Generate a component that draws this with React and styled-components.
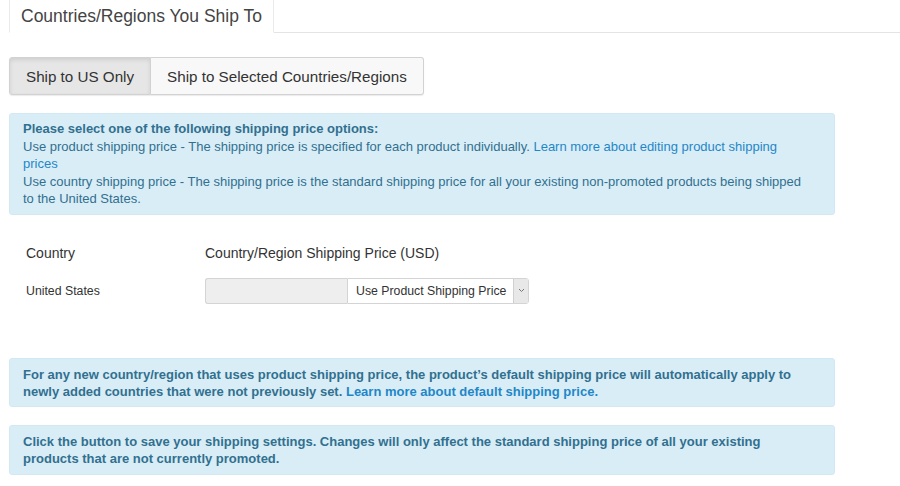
import React from "react";
import styled, { createGlobalStyle } from "styled-components";

const GlobalStyle = createGlobalStyle`
  body {
    margin: 0;
    background: #fff;
    font-family: "Liberation Sans", Arial, sans-serif;
    color: #333;
  }
`;

const Page = styled.div`
  padding: 0 65px 0 9px;
  width: 900px;
  box-sizing: border-box;
`;

const TabNav = styled.div`
  display: flex;
  border-bottom: 1px solid #e4e4e4;
  margin-right: -65px;
`;

const Tab = styled.div`
  padding: 7px 11px 6px 11px;
  margin-top: -1px;
  margin-bottom: -1px;
  font-size: 17.5px;
  line-height: 19px;
  color: #444;
  background: #fff;
  border: 1px solid #eaeaea;
  border-bottom-color: #fff;
`;

const ButtonGroup = styled.div`
  display: inline-flex;
  margin-top: 24px;
  border-radius: 3px;
  box-shadow: 0 1px 1px rgba(0, 0, 0, 0.08);
`;

const ToggleButton = styled.button`
  font-family: inherit;
  font-size: 15.2px;
  height: 38px;
  padding: 0 16px;
  color: #333;
  border: 1px solid #d2d2d2;
  background: ${(p) => (p.$active ? "#e6e6e6" : "#f8f8f8")};
  box-shadow: ${(p) => (p.$active ? "inset 0 2px 4px rgba(0,0,0,0.1)" : "none")};
  cursor: pointer;
  &:first-child {
    border-radius: 3px 0 0 3px;
  }
  &:last-child {
    border-left: none;
    border-radius: 0 3px 3px 0;
  }
`;

const Alert = styled.div`
  margin-top: 18px;
  padding: ${(p) => p.$pad || "6px 26px 6px 13px"};
  background: #d9edf7;
  border: 1px solid #d2e9f4;
  border-radius: 3px;
  color: #31708f;
  font-size: 13px;
  line-height: ${(p) => p.$lh || "17.5px"};
  font-weight: ${(p) => (p.$bold ? "bold" : "normal")};
`;

const Link = styled.a`
  color: #1f87c7;
  text-decoration: none;
`;

const Table = styled.div`
  margin-top: 28px;
  margin-bottom: 54px;
  padding-left: 17px;
  display: grid;
  grid-template-columns: 179px auto;
  row-gap: 15px;
  align-items: center;
`;

const HeadCell = styled.div`
  font-size: 14px;
  color: #333;
  line-height: 20px;
`;

const Cell = styled.div`
  font-size: 12.3px;
  color: #333;
`;

const PriceControl = styled.div`
  display: flex;
  height: 26px;
`;

const PriceInput = styled.div`
  width: 141px;
  background: #eee;
  border: 1px solid #d4d4d4;
  border-right: none;
  border-radius: 3px 0 0 3px;
`;

const Select = styled.div`
  display: flex;
  align-items: center;
  border: 1px solid #d4d4d4;
  border-radius: 0 3px 3px 0;
  font-size: 12.3px;
  color: #333;
  background: #fff;
`;

const SelectLabel = styled.span`
  padding: 0 7px 0 8px;
`;

const Arrow = styled.span`
  width: 14px;
  height: 24px;
  display: flex;
  align-items: center;
  justify-content: center;
  background: #e8e8e8;
  border-left: 1px solid #d0d0d0;
`;

export default function App() {
  return (
    <Page>
      <GlobalStyle />
      <TabNav>
        <Tab>Countries/Regions You Ship To</Tab>
      </TabNav>

      <ButtonGroup>
        <ToggleButton $active>Ship to US Only</ToggleButton>
        <ToggleButton>Ship to Selected Countries/Regions</ToggleButton>
      </ButtonGroup>

      <Alert>
        <strong>Please select one of the following shipping price options:</strong>
        <br />
        Use product shipping price - The shipping price is specified for each
        product individually.{" "}
        <Link href="#">Learn more about editing product shipping prices</Link>
        <br />
        Use country shipping price - The shipping price is the standard shipping
        price for all your existing non-promoted products being shipped to the
        United States.
      </Alert>

      <Table>
        <HeadCell>Country</HeadCell>
        <HeadCell>Country/Region Shipping Price (USD)</HeadCell>
        <Cell>United States</Cell>
        <PriceControl>
          <PriceInput />
          <Select>
            <SelectLabel>Use Product Shipping Price</SelectLabel>
            <Arrow>
              <svg width="7" height="5" viewBox="0 0 7 5">
                <path d="M1 1l2.5 2.5L6 1" fill="none" stroke="#777" strokeWidth="1" />
              </svg>
            </Arrow>
          </Select>
        </PriceControl>
      </Table>

      <Alert $bold $pad="7px 26px 6px 13px" $lh="17px">
        For any new country/region that uses product shipping price, the
        product’s default shipping price will automatically apply to newly added
        countries that were not previously set.{" "}
        <Link href="#">Learn more about default shipping price.</Link>
      </Alert>

      <Alert $bold $pad="7px 26px 7px 13px" $lh="17px">
        Click the button to save your shipping settings. Changes will only affect
        the standard shipping price of all your existing products that are not
        currently promoted.
      </Alert>
    </Page>
  );
}
